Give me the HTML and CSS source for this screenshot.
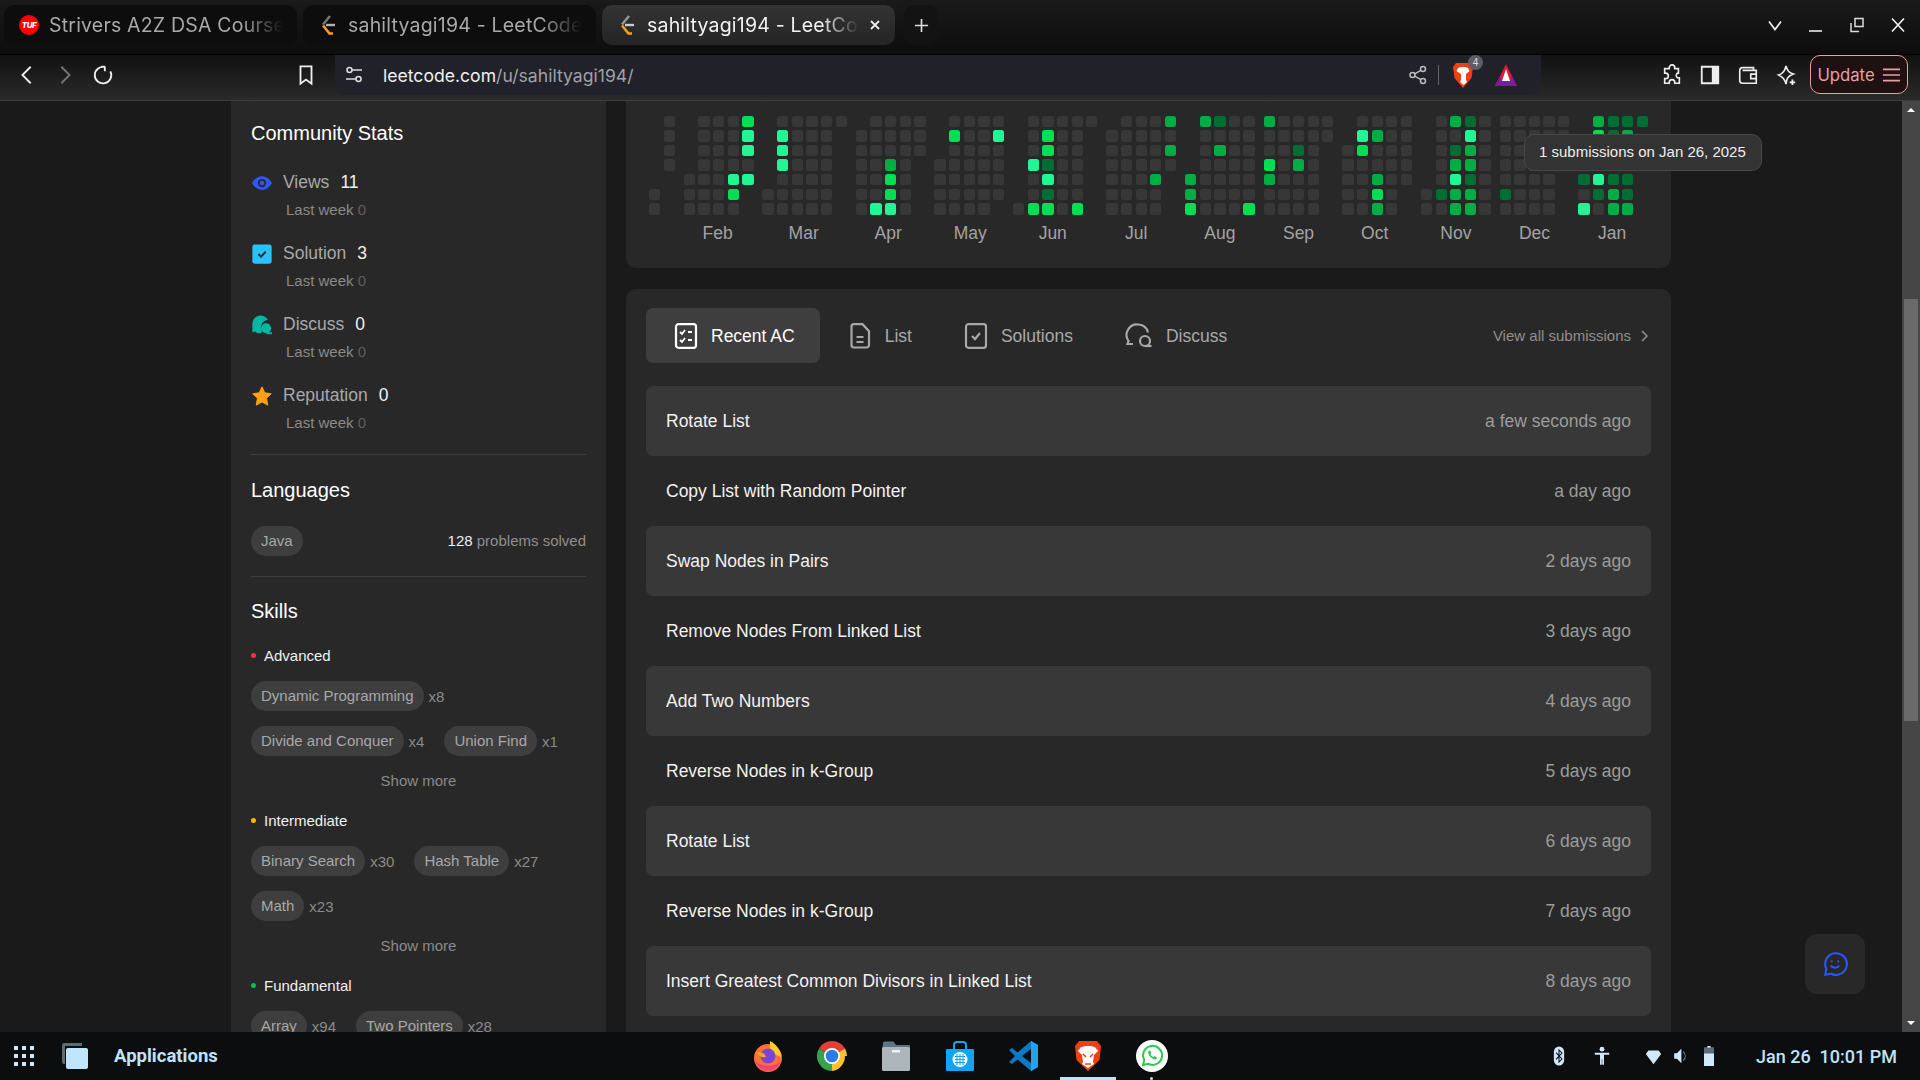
FILE: index.html
```html
<!doctype html>
<html lang="en">

<head>
  <meta charset="UTF-8" />
  <meta name="viewport" content="width=device-width, initial-scale=1.0" />
  <title>sahiltyagi194 - LeetCode Profile</title>
  <link rel="stylesheet" href="styles.css">
</head>

<body>
  <!-- Browser tabs -->
  <header class="tabstrip">
    <div class="tab">
      <span class="tuf-logo">TUF</span>
      <span class="tab-title">Strivers A2Z DSA Course/Sheet</span>
    </div>
    <div class="tab">
      <svg class="lc-logo" viewBox="0 0 20 24" fill="none"><path d="M12 3 5 11.5" stroke="#777" stroke-width="2.4"/><path d="M5 12.5 11.5 20.5H15" stroke="#f89f1b" stroke-width="2.6"/><path d="M8 12h9" stroke="#b3b3b3" stroke-width="2.4"/></svg>
      <span class="tab-title">sahiltyagi194 - LeetCode Profile</span>
    </div>
    <div class="tab active">
      <svg class="lc-logo" viewBox="0 0 20 24" fill="none"><path d="M12 3 5 11.5" stroke="#999" stroke-width="2.4"/><path d="M5 12.5 11.5 20.5H15" stroke="#f89f1b" stroke-width="2.6"/><path d="M8 12h9" stroke="#ccc" stroke-width="2.4"/></svg>
      <span class="tab-title">sahiltyagi194 - LeetCode Profile</span>
      <svg class="tab-close" viewBox="0 0 12 12" fill="none" stroke="#eee" stroke-width="1.8"><path d="M2 2l8 8M10 2l-8 8"/></svg>
    </div>
    <div class="new-tab">
      <svg viewBox="0 0 16 16" fill="none" stroke="#ddd" stroke-width="1.8"><path d="M8 1v14M1 8h14"/></svg>
    </div>
    <div class="window-controls">
      <svg viewBox="0 0 16 16" fill="none" stroke="#eee" stroke-width="1.7"><path d="M2 4.500l6 8 6-8"/></svg>
      <svg viewBox="0 0 16 16" fill="none" stroke="#ddd" stroke-width="1.7"><path d="M1 14h13"/></svg>
      <svg viewBox="0 0 16 16" fill="none" stroke="#ddd" stroke-width="1.5"><path d="M6 1.500h8v8H6zM2 6v8.500h8"/></svg>
      <svg viewBox="0 0 16 16" fill="none" stroke="#eee" stroke-width="1.7"><path d="M2 1.500l12 13M14 1.500l-12 13"/></svg>
    </div>
  </header>

  <!-- Address bar row -->
  <nav class="toolbar">
    <div class="nav-buttons">
      <button class="tool-btn"><svg viewBox="0 0 24 24" fill="none" stroke="#eee" stroke-width="2"><path d="M16 3 7 12l9 9"/></svg></button>
      <button class="tool-btn"><svg viewBox="0 0 24 24" fill="none" stroke="#777" stroke-width="2"><path d="M8 3l9 9-9 9"/></svg></button>
      <button class="tool-btn"><svg viewBox="0 0 24 24" fill="none" stroke="#eee" stroke-width="2"><path d="M14.500 3.500A9 9 0 1 0 20 8M14 3h-4M14 3v5" /></svg></button>
    </div>
    <button class="tool-btn"><svg viewBox="0 0 24 24" fill="none" stroke="#eee" stroke-width="2"><path d="M6 2.500h12v19l-6-4.500-6 4.500z"/></svg></button>
    <div class="address-bar">
      <svg class="tune-icon" viewBox="0 0 20 20" fill="none" stroke="#ddd" stroke-width="1.600"><circle cx="5.500" cy="5" r="2.500"/><path d="M8 5h10M2 14h10"/><circle cx="14.500" cy="14" r="2.500"/></svg>
      <span class="url">leetcode.com<span class="url-path">/u/sahiltyagi194/</span></span>
      <svg class="share-icon" viewBox="0 0 20 20" fill="none" stroke="#bbb" stroke-width="1.500"><circle cx="15" cy="4" r="2.500"/><circle cx="4.500" cy="10" r="2.500"/><circle cx="15" cy="16" r="2.500"/><path d="M12.800 5.300 6.700 8.800M6.700 11.200l6.100 3.500"/></svg>
      <span class="address-sep"></span>
      <span class="shield">
        <svg viewBox="0 0 24 28"><path d="M5 2h14l3 4-1.500 11L12 27 3.500 17 2 6z" fill="#f13f12"/><path d="M7 7l3-1h4l3 1 1.500 3-3.500 3v6l1 2-3.500 3-3.500-3 1-2v-6L5.500 10z" fill="#fff"/></svg>
        <span class="shield-badge">4</span>
      </span>
      <svg class="vpn-icon" viewBox="0 0 24 24"><path d="M12 1 1 23h22z" fill="#e0173a"/><path d="M5.500 14 1 23h22l-4.500-9-3 3.500h-7z" fill="#7d1b9c"/><path d="M12 6l-4 12h8z" fill="#fff"/></svg>
    </div>
    <div class="ext-buttons">
      <button class="tool-btn"><svg viewBox="0 0 24 24" fill="none" stroke="#eee" stroke-width="1.800"><path d="M9 4a3 3 0 0 1 6 0v1h4v5h-1a3 3 0 0 0 0 5h2v6h-5v-1a3 3 0 0 0-6 0v1H4v-5h1a3 3 0 0 0 0-6H4V5h5z"/></svg></button>
      <button class="tool-btn"><svg viewBox="0 0 24 24"><path d="M3 3h18v18H3z" fill="none" stroke="#eee" stroke-width="2"/><path d="M14 3h7v18h-7z" fill="#eee"/></svg></button>
      <button class="tool-btn"><svg viewBox="0 0 24 24" fill="none" stroke="#eee" stroke-width="1.800"><path d="M18 7V4H6a3 3 0 0 0-3 3v11a3 3 0 0 0 3 3h15V7H6M21 11h-6v5h6"/></svg></button>
      <button class="tool-btn"><svg viewBox="0 0 24 24" fill="none" stroke="#eee" stroke-width="1.800"><path d="M12 2c1 5 3 7.500 8 9-4 1.500-6 3-7 6-.5 2-1 3.500-1 5-1-4.500-3.500-8-8-10 5-1.500 7-5 8-10z"/><path d="M19 17v6M16 20h6" stroke-width="2"/></svg></button>
    </div>
    <button class="update-btn">Update
      <svg viewBox="0 0 20 16" fill="none" stroke="#e8a0a0" stroke-width="1.800"><path d="M1 2h18M1 8h18M1 14h18"/></svg>
    </button>
  </nav>

  <main class="page">
    <aside class="side-panel">
      <h2 class="panel-title">Community Stats</h2>
      <div class="stat-list">
        <div class="stat">
          <div class="stat-top">
            <svg class="stat-icon" viewBox="0 0 24 24"><path d="M1 12c3-5 7-7.500 11-7.500S20 7 23 12c-3 5-7 7.500-11 7.500S4 17 1 12z" fill="#2f55ff"/><circle cx="12" cy="12" r="4.500" fill="#282828"/><circle cx="12" cy="12" r="2.500" fill="#2f55ff"/></svg>
            <span class="stat-name">Views</span><span class="stat-value">11</span>
          </div>
          <div class="stat-week">Last week <span class="stat-week-num">0</span></div>
        </div>
        <div class="stat">
          <div class="stat-top">
            <svg class="stat-icon" viewBox="0 0 24 24"><rect x="1.500" y="1.500" width="21" height="21" rx="2.500" fill="#28c3ff"/><path d="M8 12l3 3 5-5.500" fill="none" stroke="#222" stroke-width="2"/></svg>
            <span class="stat-name">Solution</span><span class="stat-value">3</span>
          </div>
          <div class="stat-week">Last week <span class="stat-week-num">0</span></div>
        </div>
        <div class="stat">
          <div class="stat-top">
            <svg class="stat-icon" viewBox="0 0 24 24"><path d="M1.500 20V11a9 9 0 0 1 17-4.500 8 8 0 0 0-6.500 12l-1 2.500H7L5 19z" fill="#00b8a3"/><circle cx="16.500" cy="15.500" r="5.500" fill="#00b8a3"/><path d="M17 20h6v2h-6z" fill="#00b8a3"/></svg>
            <span class="stat-name">Discuss</span><span class="stat-value">0</span>
          </div>
          <div class="stat-week">Last week <span class="stat-week-num">0</span></div>
        </div>
        <div class="stat">
          <div class="stat-top">
            <svg class="stat-icon" viewBox="0 0 24 24"><path d="M12 2l3 6.500 7 1-5 5 1.300 7.500L12 18.500 5.700 22 7 14.500l-5-5 7-1z" fill="#ffa116" stroke="#ffa116" stroke-linejoin="round"/></svg>
            <span class="stat-name">Reputation</span><span class="stat-value">0</span>
          </div>
          <div class="stat-week">Last week <span class="stat-week-num">0</span></div>
        </div>
      </div>

      <hr class="divider">

      <h2 class="panel-title">Languages</h2>
      <div class="lang-row">
        <span class="pill">Java</span>
        <span class="lang-count"><span class="lang-num">128</span> problems solved</span>
      </div>

      <hr class="divider">

      <h2 class="panel-title">Skills</h2>

      <div class="skill-level"><span class="dot dot-red"></span>Advanced</div>
      <div class="skill-rows">
        <div class="skill-row">
          <span class="skill"><span class="pill">Dynamic Programming</span><span class="count">x8</span></span>
        </div>
        <div class="skill-row">
          <span class="skill"><span class="pill">Divide and Conquer</span><span class="count">x4</span></span>
          <span class="skill"><span class="pill">Union Find</span><span class="count">x1</span></span>
        </div>
      </div>
      <div class="show-more">Show more</div>

      <div class="skill-level"><span class="dot dot-yellow"></span>Intermediate</div>
      <div class="skill-rows">
        <div class="skill-row">
          <span class="skill"><span class="pill">Binary Search</span><span class="count">x30</span></span>
          <span class="skill"><span class="pill">Hash Table</span><span class="count">x27</span></span>
        </div>
        <div class="skill-row">
          <span class="skill"><span class="pill">Math</span><span class="count">x23</span></span>
        </div>
      </div>
      <div class="show-more">Show more</div>

      <div class="skill-level"><span class="dot dot-green"></span>Fundamental</div>
      <div class="skill-rows">
        <div class="skill-row">
          <span class="skill"><span class="pill">Array</span><span class="count">x94</span></span>
          <span class="skill"><span class="pill">Two Pointers</span><span class="count">x28</span></span>
        </div>
      </div>
    </aside>

    <section class="main-col">
      <div class="card heatmap-card">
        <div class="heatmap" id="heatmap"></div>
        <div class="heat-tooltip">1 submissions on Jan 26, 2025</div>
      </div>

      <div class="card recent-card">
        <div class="tabs-row">
          <div class="sub-tab active">
            <svg viewBox="0 0 24 26" fill="none" stroke="currentColor" stroke-width="2.200"><rect x="2" y="1.200" width="20" height="23.600" rx="2.500"/><path d="M6 9l2 2 3-4M6 17l2 2 3-4" stroke-width="1.800"/><path d="M14 9h4M14 17h4" stroke-width="2.200"/></svg>
            Recent AC
          </div>
          <div class="sub-tab">
            <svg viewBox="0 0 24 26" fill="none" stroke="currentColor" stroke-width="2.200"><path d="M3.500 3.500A2.500 2.500 0 0 1 6 1.200h8.500l6.500 7V22a2.500 2.500 0 0 1-2.500 2.500H6A2.500 2.500 0 0 1 3.500 22z"/><path d="M8.500 14h7M8.500 19h7"/></svg>
            List
          </div>
          <div class="sub-tab">
            <svg viewBox="0 0 24 26" fill="none" stroke="currentColor" stroke-width="2.200"><rect x="2" y="1.200" width="20" height="23.600" rx="2.500"/><path d="M8 13l3 3 5-6"/></svg>
            Solutions
          </div>
          <div class="sub-tab discuss-tab">
            <svg viewBox="0 0 28 26" fill="none" stroke="currentColor" stroke-width="2.200"><path d="M8 21H2.500l1-3A10.500 10.500 0 0 1 13 1.500a10 10 0 0 1 10 8"/><circle cx="20" cy="18" r="5"/><path d="M20 23h6.500"/></svg>
            Discuss
          </div>
          <div class="view-all">View all submissions
            <svg viewBox="0 0 10 14" fill="none" stroke="currentColor" stroke-width="1.500"><path d="M2 2l5 5-5 5"/></svg>
          </div>
        </div>

        <ul class="submission-list">
          <li class="submission"><span>Rotate List</span><span class="ago">a few seconds ago</span></li>
          <li class="submission"><span>Copy List with Random Pointer</span><span class="ago">a day ago</span></li>
          <li class="submission"><span>Swap Nodes in Pairs</span><span class="ago">2 days ago</span></li>
          <li class="submission"><span>Remove Nodes From Linked List</span><span class="ago">3 days ago</span></li>
          <li class="submission"><span>Add Two Numbers</span><span class="ago">4 days ago</span></li>
          <li class="submission"><span>Reverse Nodes in k-Group</span><span class="ago">5 days ago</span></li>
          <li class="submission"><span>Rotate List</span><span class="ago">6 days ago</span></li>
          <li class="submission"><span>Reverse Nodes in k-Group</span><span class="ago">7 days ago</span></li>
          <li class="submission"><span>Insert Greatest Common Divisors in Linked List</span><span class="ago">8 days ago</span></li>
        </ul>
      </div>
    </section>

    <div class="chat-btn">
      <svg viewBox="0 0 24 24" fill="none" stroke="#2856ff" stroke-width="1.900"><path d="M3 22l1-5.500A10 10 0 1 1 8.500 21z"/><path d="M8 13.500c2 2.500 6 2.500 8 0" /><circle cx="9" cy="9.500" r="1" fill="#2856ff" stroke="none"/><circle cx="15" cy="9.500" r="1" fill="#2856ff" stroke="none"/></svg>
    </div>

    <div class="scrollbar">
      <span class="arrow-up"></span>
      <span class="scroll-thumb"></span>
      <span class="arrow-down"></span>
    </div>
  </main>

  <!-- Desktop panel -->
  <footer class="taskbar">
    <div class="task-left">
      <svg class="apps-grid" viewBox="0 0 20 20" fill="#cfe9fb"><rect x="0" y="0" width="4" height="4"/><rect x="8" y="0" width="4" height="4"/><rect x="16" y="0" width="4" height="4"/><rect x="0" y="8" width="4" height="4"/><rect x="8" y="8" width="4" height="4"/><rect x="16" y="8" width="4" height="4"/><rect x="0" y="16" width="4" height="4"/><rect x="8" y="16" width="4" height="4"/><rect x="16" y="16" width="4" height="4"/></svg>
      <svg class="windows-icon" viewBox="0 0 28 28"><path d="M1 3a2 2 0 0 1 2-2h18v3H4v18H3a2 2 0 0 1-2-2z" fill="#5d6b75"/><rect x="5" y="6" width="22" height="21" rx="2" fill="#bfe6fd"/></svg>
      <span class="apps-label">Applications</span>
    </div>
    <div class="dock">
      <div class="dock-item">
        <svg viewBox="0 0 32 32"><circle cx="16" cy="18" r="14" fill="#ff7139"/><path d="M3 21a13.500 13.500 0 0 0 26 0c-6 6-20 6-26 0z" fill="#f5436f"/><path d="M18 1c6 3 11 9 11 16l-7-3-4-6z" fill="#ffcb2d"/><circle cx="16" cy="16" r="7.500" fill="#7a45d6"/><path d="M4 12c3 0 9 0 10 5-4 1-8-1-10-5z" fill="#ff9f1a"/></svg>
      </div>
      <div class="dock-item">
        <svg viewBox="0 0 32 32"><path d="M16 16 3 8.500A15 15 0 0 1 29 8.500z" fill="#e53f33"/><path d="M16 16H29a15 15 0 0 1-13 15z" fill="#fbc02d"/><path d="M29 8.500A15 15 0 0 1 31 16H16z" fill="#fbc02d"/><path d="M16 16v15A15 15 0 0 1 3 8.500z" fill="#34a24f"/><circle cx="16" cy="16" r="8" fill="#fff"/><circle cx="16" cy="16" r="6.300" fill="#2a7de9"/></svg>
      </div>
      <div class="dock-item">
        <svg viewBox="0 0 32 32"><path d="M3 3a1.500 1.500 0 0 1 1.500-1.500h9L16 5h14v6H2z" fill="#5e7581"/><rect x="2" y="7" width="28" height="24" rx="1.500" fill="#adb6bb"/><rect x="12" y="10" width="8" height="2.500" fill="#eef1f2"/></svg>
      </div>
      <div class="dock-item">
        <svg viewBox="0 0 32 32"><path d="M10 10V5a3 3 0 0 1 3-3h6a3 3 0 0 1 3 3v5" fill="none" stroke="#0ea5f5" stroke-width="2"/><rect x="2" y="9" width="28" height="22" rx="1" fill="#0ea5f5"/><circle cx="16" cy="19.500" r="7.500" fill="#fff"/><path d="M11 16.500h10M11 19.500h10M11 22.500h10M13 14v11M16 14v11M19 14v11" stroke="#0ea5f5" stroke-width="1"/></svg>
      </div>
      <div class="dock-item">
        <svg viewBox="0 0 32 32"><path d="M23 1 30 5v22l-7 4L9.500 19.500 4 24l-3-2 6-6-6-6 3-2 5.500 4.500z" fill="#0f78c2"/><path d="M23 1 30 5v22l-7 4z" fill="#22a3ee"/><path d="M23 9v14l-9-7z" fill="#0b0d0f"/></svg>
      </div>
      <div class="dock-item is-open">
        <svg viewBox="0 0 32 32"><path d="M7 1h18l4 5-1.500 14L16 31 4.500 20 3 6z" fill="#f1400f"/><path d="M9 7l5-1h4l5 1 3 4-4 4-1 7 1 2-6 4-6-4 1-2-1-7-4-4z" fill="#fff"/><path d="M14 17l-3-3M18 17l3-3M13 24h6" stroke="#f1400f" stroke-width="1.500"/></svg>
      </div>
      <div class="dock-item has-dot">
        <svg viewBox="0 0 32 32"><circle cx="16" cy="16" r="16" fill="#fff"/><path d="M7 25l1.300-5A9.500 9.500 0 1 1 12 23.700z" fill="none" stroke="#2cc951" stroke-width="2"/><path d="M12.500 11c-1 1.500 0 4 2 6s4.500 3 6 2l.5-1.500-2.500-1.500-1 1c-1.500-.5-2.500-1.500-3-3l1-1-1.500-2.500z" fill="#2cc951"/></svg>
      </div>
    </div>
    <div class="tray">
      <svg class="tray-bt" viewBox="0 0 14 24"><rect x="1" y="1" width="12" height="22" rx="6" fill="#cfe9fb"/><path d="M3.500 8l7 7.500L7 19V5l3.500 3.500-7 7.500" fill="none" stroke="#0b0d0f" stroke-width="1.200"/></svg>
      <svg class="tray-a11y" viewBox="0 0 20 24" fill="#cfe9fb"><circle cx="10" cy="3.500" r="3"/><path d="M1 8h18v2.500h-6.500V23h-2.200v-7H9.700v7H7.500V10.500H1z"/></svg>
      <svg class="tray-wifi" viewBox="0 0 20 20" fill="#cfe9fb"><path d="M4 3h12l3 4-9 12L1 7z"/></svg>
      <svg class="tray-vol" viewBox="0 0 16 20"><path d="M1 7h3l5-5v16l-5-5H1z" fill="#cfe9fb"/><path d="M11 5c3 3 3 7 0 10" fill="none" stroke="#5d7280" stroke-width="1.400"/></svg>
      <svg class="tray-bat" viewBox="0 0 12 24"><path d="M4 0h4v2h4v22H0V2h4z" fill="#cfe9fb"/><path d="M0 2h12v7H0z" fill="#5d6b75"/></svg>
      <span class="clock">Jan 26&nbsp; 10:01 PM</span>
    </div>
  </footer>

  <script src="script.js"></script>
</body>

</html>
```

FILE: styles.css
```css
* {
  margin: 0;
  padding: 0;
  box-sizing: border-box;
}

body {
  display: flex;
  flex-direction: column;
  height: 100vh;
  overflow: hidden;
  background: #1a1a1a;
  color: #fff;
  font-family: "Liberation Sans", Arial, sans-serif;
}

button {
  border: 0;
  background: none;
  font: inherit;
  color: inherit;
}

/* Browser tabs */
.tabstrip {
  display: flex;
  flex: 0 0 55px;
  padding: 5px 0 0 4px;
  gap: 6px;
  background: linear-gradient(#1a1a1a, #0d0d0d);
  border-bottom: 1px solid #000;
  font-family: Inter, sans-serif;
}

.tab {
  display: flex;
  align-items: center;
  gap: 10px;
  flex: 0 0 293px;
  min-width: 0;
  height: 40px;
  padding: 0 14px;
  border-radius: 10px;
  background: #0d0d0d;
  color: #a9a9a9;
  font-size: 19.500px;
  letter-spacing: 0.2px;
}

.tab.active {
  background: linear-gradient(#333, #252525);
  color: #f2f2f2;
}

.tab-title {
  flex: 1;
  min-width: 0;
  overflow: hidden;
  white-space: nowrap;
  -webkit-mask-image: linear-gradient(to right, #000 82%, transparent 100%);
  mask-image: linear-gradient(to right, #000 82%, transparent 100%);
}

.tuf-logo {
  display: flex;
  align-items: center;
  justify-content: center;
  flex: 0 0 20px;
  height: 20px;
  margin-left: 1px;
  border-radius: 50%;
  background: #f00;
  color: #fff;
  font-size: 8px;
  font-weight: 800;
  font-style: italic;
  letter-spacing: -0.5px;
}

.lc-logo {
  flex: 0 0 20px;
  height: 24px;
  margin-left: 1px;
}

.tab-close {
  flex: 0 0 12px;
  height: 12px;
}

.new-tab {
  display: flex;
  align-items: center;
  justify-content: center;
  flex: 0 0 34px;
  height: 40px;
  margin-left: 3px;
  border-radius: 10px;
  background: #131313;
}

.new-tab svg {
  width: 15px;
  height: 15px;
}

.window-controls {
  display: flex;
  align-items: center;
  gap: 25px;
  height: 40px;
  margin-left: auto;
  padding-right: 14px;
}

.window-controls svg {
  width: 16px;
  height: 16px;
}

/* Address bar row */
.toolbar {
  display: flex;
  flex: 0 0 46px;
  background: linear-gradient(#111, #2a2a2a);
  border-bottom: 1px solid #3c3c3c;
}

.nav-buttons {
  display: flex;
  flex: 0 0 287px;
  padding-left: 8px;
}

.tool-btn {
  display: flex;
  align-items: center;
  justify-content: center;
  width: 38px;
  height: 40px;
}

.tool-btn svg {
  width: 22px;
  height: 22px;
}

.address-bar {
  display: flex;
  align-items: center;
  flex: 0 0 1206px;
  height: 40px;
  margin-left: 10px;
  padding: 0 23px 0 9px;
  border-radius: 0 0 10px 10px;
  background: #21212a;
}

.tune-icon {
  flex: 0 0 20px;
  height: 20px;
}

.url {
  flex: 1;
  margin-left: 19px;
  font-family: Inter, sans-serif;
  font-size: 17.600px;
  color: #f0f0f0;
}

.url-path {
  color: #a0a0a8;
}

.share-icon {
  flex: 0 0 20px;
  height: 20px;
}

.address-sep {
  width: 1px;
  height: 20px;
  margin: 0 12px 0 10px;
  background: #666;
}

.shield {
  position: relative;
  display: flex;
  width: 24px;
  height: 28px;
}

.shield-badge {
  position: absolute;
  top: -6px;
  right: -8px;
  width: 15px;
  height: 15px;
  border-radius: 50%;
  background: #5c5d68;
  color: #ddd;
  font-size: 10px;
  line-height: 15px;
  text-align: center;
}

.vpn-icon {
  flex: 0 0 24px;
  height: 24px;
  margin-left: 19px;
}

.ext-buttons {
  display: flex;
  margin-left: 112px;
}

.update-btn {
  display: flex;
  align-items: center;
  justify-content: center;
  gap: 7px;
  width: 98px;
  height: 39px;
  margin-left: 5px;
  border: 1px solid #e8a0a0;
  border-radius: 10px;
  background: #1f1011;
  color: #e8a0a0;
  font-family: Inter, sans-serif;
  font-size: 16.700px;
}

.update-btn svg {
  width: 19px;
  height: 16px;
}

/* Page content */
.page {
  position: relative;
  display: flex;
  flex: 1;
  gap: 20px;
  min-height: 0;
  padding-left: 231px;
  overflow: hidden;
}

.side-panel {
  flex: 0 0 375px;
  padding: 18px 20px 0;
  background: #282828;
}

.panel-title {
  font-size: 20px;
  font-weight: 400;
  line-height: 28px;
}

.stat-list {
  display: flex;
  flex-direction: column;
  gap: 20.700px;
  margin-top: 22.700px;
}

.stat-top {
  display: flex;
  align-items: center;
  height: 26px;
  font-size: 17.500px;
}

.stat-icon {
  flex: 0 0 22px;
  width: 22px;
  height: 22px;
}

.stat-name {
  margin-left: 10px;
  color: #a8a8a8;
}

.stat-value {
  margin-left: 11px;
  color: #f0f0f0;
}

.stat-week {
  margin: 4.300px 0 0 35px;
  font-size: 15px;
  line-height: 20px;
  color: #8a8a8a;
}

.stat-week-num {
  color: #5e5e5e;
}

.divider {
  height: 1px;
  margin: 21.500px 0 21px;
  border: 0;
  background: #3d3d3d;
}

.lang-row {
  display: flex;
  align-items: center;
  justify-content: space-between;
  margin-top: 21.400px;
}

.lang-row + .divider {
  margin-top: 20px;
  margin-bottom: 20px;
}

.pill {
  display: inline-block;
  height: 30px;
  padding: 0 10px;
  border-radius: 15px;
  background: #3e3e3e;
  color: #a8a8a8;
  font-size: 15px;
  line-height: 29px;
  white-space: nowrap;
}

.lang-count {
  font-size: 15px;
  color: #8f8f8f;
}

.lang-num {
  color: #eee;
}

.skill-level {
  display: flex;
  align-items: center;
  margin-top: 21px;
  font-size: 15px;
  line-height: 20px;
  color: #f0f0f0;
}

.dot {
  width: 5px;
  height: 5px;
  margin-right: 8px;
  border-radius: 50%;
}

.dot-red {
  background: #ff2d55;
}

.dot-yellow {
  background: #ffb700;
}

.dot-green {
  background: #00c45a;
}

.skill-rows {
  display: flex;
  flex-direction: column;
  gap: 15px;
  margin-top: 15.500px;
}

.skill-row {
  display: flex;
  gap: 20px;
}

.skill {
  display: flex;
  align-items: center;
  gap: 5px;
}

.count {
  font-size: 15px;
  color: #8a8a8a;
}

.show-more {
  margin-top: 14.500px;
  font-size: 15px;
  line-height: 20px;
  text-align: center;
  color: #8a8a8a;
}

.show-more + .skill-level {
  margin-top: 20px;
}

/* Main column */
.main-col {
  display: flex;
  flex-direction: column;
  flex: 0 0 1045px;
  gap: 21px;
}

.card {
  background: #282828;
  border-radius: 10px;
}

.heatmap-card {
  position: relative;
  flex: 0 0 167px;
  padding: 14.600px 0 0 23px;
  border-radius: 0 0 10px 10px;
}

.heatmap {
  display: flex;
  gap: 8.870px;
}

.month {
  display: flex;
  flex-direction: column;
  align-items: center;
}

.month-grid {
  display: grid;
  grid-template-rows: repeat(7, 11.300px);
  grid-auto-flow: column;
  grid-auto-columns: 11.300px;
  gap: 3.340px;
}

.cell {
  border-radius: 2.500px;
}

.lv0 {
  background: #373737;
}

.lv1 {
  background: #006d32;
}

.lv2 {
  background: #00ac44;
}

.lv3 {
  background: #00de54;
}

.lv4 {
  background: #22f694;
}

.month-label {
  margin-top: 8px;
  font-size: 17.500px;
  line-height: 20px;
  color: #a3a3a3;
  white-space: nowrap;
}

.heat-tooltip {
  position: absolute;
  top: 33px;
  left: 898px;
  width: 238px;
  height: 37px;
  padding-left: 14px;
  border: 1px solid #484848;
  border-radius: 10px;
  background: #333;
  color: #eee;
  font-size: 15px;
  line-height: 33px;
  white-space: nowrap;
}

.recent-card {
  flex: 1;
  padding: 19px 20px 0;
  border-radius: 10px 10px 0 0;
}

.tabs-row {
  display: flex;
  align-items: center;
  height: 55px;
  font-size: 17.500px;
}

.sub-tab {
  display: flex;
  align-items: center;
  gap: 13px;
  height: 55px;
  padding: 1px 24px 0 28px;
  border-radius: 7px;
  color: #a8a8a8;
}

.sub-tab svg {
  width: 24px;
  height: 26px;
}

.discuss-tab svg {
  width: 28px;
}

.sub-tab.active {
  padding-right: 25px;
  background: #3e3e3e;
  color: #fff;
}

.view-all {
  display: flex;
  align-items: center;
  gap: 9px;
  margin-left: auto;
  margin-right: 1px;
  font-size: 15px;
  color: #8f8f8f;
}

.view-all svg {
  width: 10px;
  height: 14px;
}

.submission-list {
  margin-top: 23px;
  list-style: none;
}

.submission {
  display: flex;
  align-items: center;
  justify-content: space-between;
  height: 70px;
  padding: 0 20px;
  border-radius: 7px;
  font-size: 17.500px;
  color: #f2f2f2;
}

.submission:nth-child(odd) {
  background: #383838;
}

.ago {
  color: #9c9c9c;
}

.chat-btn {
  position: absolute;
  top: 833px;
  left: 1805px;
  display: flex;
  align-items: center;
  justify-content: center;
  width: 60px;
  height: 60px;
  border-radius: 12px;
  background: #282828;
}

.chat-btn svg {
  width: 26px;
  height: 26px;
}

.scrollbar {
  position: relative;
  flex: 0 0 18px;
  margin-left: auto;
  background: #464646;
}

/* arrows and thumb sit on the track */
.scroll-thumb {
  position: absolute;
  top: 198px;
  left: 2px;
  width: 14px;
  height: 422px;
  background: #6a6a6a;
}

.arrow-up,
.arrow-down {
  position: absolute;
  left: 5px;
  width: 0;
  height: 0;
  border-left: 4px solid transparent;
  border-right: 4px solid transparent;
}

.arrow-up {
  top: 7px;
  border-bottom: 4px solid #fff;
}

.arrow-down {
  bottom: 7px;
  border-top: 4px solid #fff;
}

/* Desktop panel */
.taskbar {
  display: flex;
  align-items: center;
  flex: 0 0 48px;
  background: #0b0d0f;
}

.task-left {
  display: flex;
  align-items: center;
  flex: 0 0 736px;
  padding-left: 14px;
}

.apps-grid {
  width: 20px;
  height: 20px;
}

.windows-icon {
  width: 28px;
  height: 28px;
  margin-left: 27px;
}

.apps-label {
  margin-left: 25px;
  padding-bottom: 1px;
  font-family: Roboto, sans-serif;
  font-size: 18.500px;
  font-weight: 700;
  color: #bfe3fb;
}

.dock {
  display: flex;
}

.dock-item {
  position: relative;
  display: flex;
  align-items: center;
  justify-content: center;
  width: 64px;
  height: 48px;
}

.dock-item svg {
  width: 32px;
  height: 32px;
}

.is-open::after {
  content: "";
  position: absolute;
  left: 4px;
  right: 4px;
  bottom: 0;
  height: 3px;
  background: #bfe3fb;
}

.has-dot::after {
  content: "";
  position: absolute;
  left: 30px;
  bottom: 0;
  width: 3px;
  height: 3px;
  border-radius: 50%;
  background: #bfe3fb;
}

.tray {
  display: flex;
  align-items: center;
  margin-left: 369px;
}

.tray-bt {
  width: 12px;
  height: 22px;
}

.tray-a11y {
  width: 16px;
  height: 20px;
  margin-left: 29px;
}

.tray-wifi {
  width: 17px;
  height: 17px;
  margin-left: 35px;
}

.tray-vol {
  width: 15px;
  height: 18px;
  margin-left: 11px;
}

.tray-bat {
  width: 10px;
  height: 20px;
  margin-left: 16px;
}

.clock {
  margin-left: 42px;
  font-family: Roboto, sans-serif;
  font-size: 18px;
  font-weight: 500;
  color: #bfe3fb;
  white-space: nowrap;
}
```

FILE: script.js
```js
// Heatmap data: name, label nudge in px, one string per week (top to bottom).
// "-" no day, 0 no submissions, 1-4 green levels
const months = [
  ["", 0, ["-----00", "0000---"]],
  ["Feb", -1, ["----000", "0000000", "0000000", "0000430", "34404--"]],
  ["Mar", -1, ["-----00", "0444000", "0000000", "0000000", "0000000", "0------"]],
  ["Apr", -2.5, ["-000000", "0000004", "0002334", "0000000", "000----"]],
  ["May", 1, ["---0000", "0300000", "0000000", "0000000", "040000-"]],
  ["Jun", -2.5, ["------0", "0004003", "0331413", "0000000", "0000003", "0------"]],
  ["Jul", -5, ["-000000", "0000000", "0000000", "0000200", "2020---"]],
  ["Aug", 0, ["----223", "2000000", "1020000", "0000000", "0000003"]],
  ["Sep", 0, ["2003200", "0000000", "0012000", "0000000", "00-----"]],
  ["Oct", -2.5, ["--00000", "0430000", "0200232", "0000000", "00000--"]],
  ["Nov", 0, ["-----00", "0000010", "2012422", "1422122", "0000000"]],
  ["Dec", 0, ["0000010", "0000000", "0000000", "0000000", "000----"]],
  ["Jan", -1, ["---0104", "2300410", "1100122", "1200112", "1------"]],
];

const heatmap = document.getElementById("heatmap");

months.forEach(([name, nudge, weeks]) => {
  const month = document.createElement("div");
  month.className = "month";

  const grid = document.createElement("div");
  grid.className = "month-grid";
  weeks.join("").split("").forEach((level) => {
    const cell = document.createElement("div");
    cell.className = level === "-" ? "cell" : `cell lv${level}`;
    grid.appendChild(cell);
  });
  month.appendChild(grid);

  const label = document.createElement("div");
  label.className = "month-label";
  label.textContent = name;
  label.style.transform = `translateX(${nudge}px)`;
  month.appendChild(label);

  heatmap.appendChild(month);
});
```
